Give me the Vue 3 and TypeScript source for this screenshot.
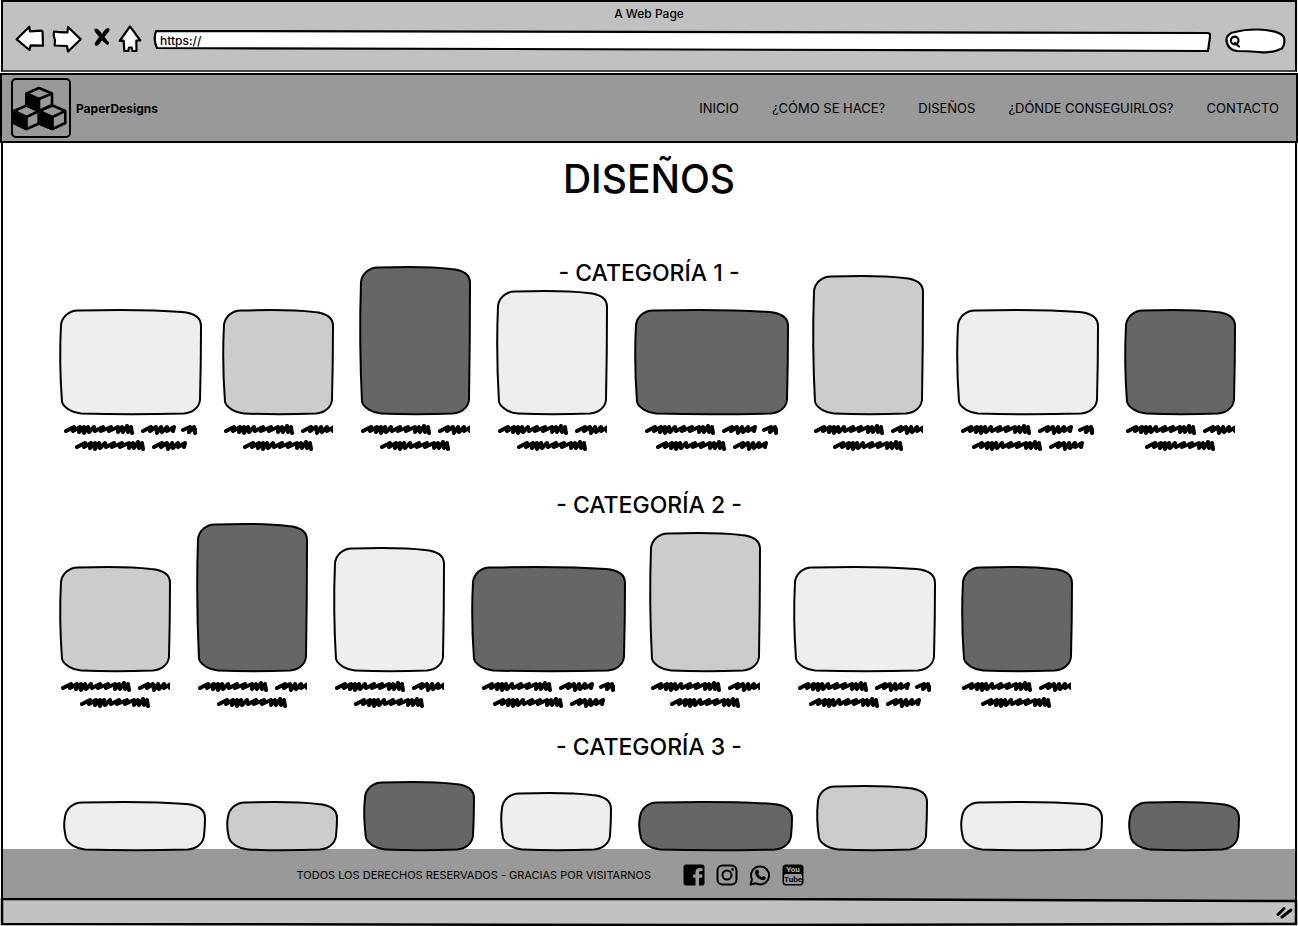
<script setup lang="ts">
type Tone = 'light' | 'mid' | 'dark'

interface Design {
  slot: number
  width: number
  height: number
  tone: Tone
}

interface Category {
  title: string
  spacing: string
  captions: boolean
  designs: Design[]
}

const card = (slot: number, width: number, height: number, tone: Tone): Design => ({ slot, width, height, tone })

const links: string[] = ['INICIO', '¿CÓMO SE HACE?', 'DISEÑOS', '¿DÓNDE CONSEGUIRLOS?', 'CONTACTO']

const categories: Category[] = [
  {
    title: '- CATEGORÍA 1 -',
    spacing: 'raised',
    captions: true,
    designs: [
      card(163, 143, 106, 'light'),
      card(137, 112, 106, 'mid'),
      card(137, 112, 149, 'dark'),
      card(138, 112, 125, 'light'),
      card(178, 155, 106, 'dark'),
      card(144, 112, 140, 'mid'),
      card(168, 143, 106, 'light'),
      card(171, 112, 106, 'dark'),
    ],
  },
  {
    title: '- CATEGORÍA 2 -',
    spacing: 'close',
    captions: true,
    designs: [
      card(137, 112, 106, 'mid'),
      card(137, 112, 149, 'dark'),
      card(138, 112, 125, 'light'),
      card(178, 155, 106, 'dark'),
      card(144, 112, 140, 'mid'),
      card(168, 143, 106, 'light'),
      card(334, 112, 106, 'dark'),
    ],
  },
  {
    title: '- CATEGORÍA 3 -',
    spacing: 'loose',
    captions: false,
    designs: [
      card(163, 143, 50, 'light'),
      card(137, 112, 50, 'mid'),
      card(137, 112, 70, 'dark'),
      card(138, 112, 59, 'light'),
      card(178, 155, 50, 'dark'),
      card(144, 112, 66, 'mid'),
      card(168, 143, 50, 'light'),
      card(167, 112, 50, 'dark'),
    ],
  },
]

// Hand-drawn rounded rectangle for a card of the given size
function outline(w: number, h: number): string {
  const mid = Math.round(h / 2)
  return [
    `M2 16`,
    `C3 8 10 1 20 1.5`,
    `Q${w * 0.6} 0 ${w - 20} 3`,
    `C${w - 8} 4 ${w - 1} 8 ${w - 1} 17`,
    `Q${w - 1} ${mid} ${w - 2} ${h - 15}`,
    `C${w - 3} ${h - 7} ${w - 10} ${h - 2} ${w - 18} ${h - 1.5}`,
    `Q${w * 0.5} ${h} 22 ${h - 1.5}`,
    `C14 ${h - 2} 5 ${h - 7} 3 ${h - 13}`,
    `Q0 ${mid} 2 16Z`,
  ].join(' ')
}

const scribble: string =
  'M2 7L10 3L9 7L16 3L15 8L20 3L20 9L24 3L25 8L30 3L31 7L39 3L37 7L47 3L45 7L54 3L54 8L58 3L59 8L63 2L64 8L67 3L68 9' +
  'M79 7L87 3L86 7L92 3L93 9L97 3L98 8L103 3L103 7L110 3L109 7' +
  'M119 6L126 3L125 8L130 3L131 9L136 3'

const captionLines = (d: Design): number[] => (d.width > 120 ? [133, 112] : [109, 71])
</script>

<template>
  <div class="window">
    <div class="chrome">
      <div class="window-title">A Web Page</div>
      <div class="toolbar">
        <button type="button" class="tool" aria-label="Back">
          <svg width="32" height="30" viewBox="14 22 32 30"><path class="ink paper" d="M16.7 37.3L29.3 24.7L30 29.3L41 28.7Q43 29 42.6 31L43 43.7L30.7 43.3L29.5 48Z" /></svg>
        </button>
        <button type="button" class="tool" aria-label="Forward">
          <svg width="32" height="30" viewBox="51 22 32 30"><path class="ink paper" d="M80.7 37.3L68 25L67.4 30.3Q60 30.5 54 29.5Q53 34 55 38L54.7 43.5L67 44L68 49.5Z" /></svg>
        </button>
        <button type="button" class="tool stop" aria-label="Stop">
          <svg width="20" height="30" viewBox="92 23 20 30"><path d="M96 27.5Q99 28 102 33Q104.500 28 108 27Q110.500 27.500 109 30.500L104.500 36L109 41.500Q109.500 44.500 106.500 43.500L102 39.500L98 44.500Q94.500 45.500 94.500 42.500L99 36L94.500 30Q94 27.500 96 27.500Z" /></svg>
        </button>
        <button type="button" class="tool" aria-label="Home">
          <svg width="26" height="30" viewBox="117 22 26 30"><path class="ink paper" d="M130 24.3L140.3 38.5L136.3 38.5L136.5 49H132.3L131.7 45.5H129L128.3 49H124.3L123.7 38.7L119.7 39Z" /></svg>
        </button>
        <label class="address">
          <svg class="frame" viewBox="0 0 1058 24" preserveAspectRatio="none" aria-hidden="true"><path class="ink paper" d="M3 2L1054 4Q1058 4 1057 8L1055 22L4 19Q0 11 3 2Z" vector-effect="non-scaling-stroke" /></svg>
          <input type="text" value="https://" aria-label="Address" />
        </label>
        <label class="search">
          <svg class="frame" viewBox="0 0 62 26" aria-hidden="true">
            <path class="ink paper" d="M2.5 13C2 8 6 4.5 11 4Q21 1.3 34 1.5Q55 2.5 59.5 8.5Q62 15 58 20.5C53 23 45 24.5 39 24.3Q22 23 13 23Q4 22 2.5 13Z" />
            <path class="ink" fill="none" d="M14.5 12.500A3.800 3.800 0 1 1 10.700 8.700A3.800 3.800 0 0 1 14.500 12.500M11 15L15 18.500" />
          </svg>
          <input type="search" aria-label="Search" />
        </label>
      </div>
    </div>

    <header class="site-header">
      <a class="brand" href="#">
        <svg width="62" height="62" viewBox="0 0 62 62" aria-hidden="true">
          <rect x="2" y="2" width="58" height="58" rx="4" fill="none" stroke="#000" stroke-width="2" />
          <g stroke="#000" stroke-width="2.6" stroke-linejoin="round" fill="none">
            <path d="M29 11L42 16.5V28L29 34L16.5 28V16.5ZM29 22L42 16.5" />
            <path d="M29 22V34L16.5 28V16.5Z" fill="#000" />
            <path d="M16.5 28.5L29 34V46.5L16.5 52L4 46V34ZM16.5 40L29 34" />
            <path d="M16.5 40V52L4 46V34Z" fill="#000" />
            <path d="M42.5 28.5L55.3 34V46L42.5 52L29 46.5V34ZM42.5 40L55.3 34" />
            <path d="M42.5 40V52L29 46.5V34Z" fill="#000" />
          </g>
        </svg>
        <span>PaperDesigns</span>
      </a>
      <nav class="menu">
        <a v-for="link in links" :key="link" href="#">{{ link }}</a>
      </nav>
    </header>

    <main class="content">
      <h1>DISEÑOS</h1>
      <section v-for="category in categories" :key="category.title" class="category" :class="category.spacing">
        <h2>{{ category.title }}</h2>
        <div class="row">
          <div v-for="(d, i) in category.designs" :key="i" class="slot" :style="{ flexGrow: d.slot }">
            <figure :style="{ width: (d.width / d.slot) * 100 + '%' }">
              <svg class="card" :class="d.tone" :viewBox="`0 0 ${d.width} ${d.height}`" :height="d.height" preserveAspectRatio="none" role="img" aria-label="Diseño">
                <path :d="outline(d.width, d.height)" vector-effect="non-scaling-stroke" />
              </svg>
              <figcaption v-if="category.captions">
                <svg v-for="w in captionLines(d)" :key="w" :width="w" height="11" :viewBox="`0 0 ${w} 11`" aria-hidden="true">
                  <path :d="scribble" />
                </svg>
              </figcaption>
            </figure>
          </div>
        </div>
      </section>
    </main>

    <footer class="site-footer">
      <p>TODOS LOS DERECHOS RESERVADOS - GRACIAS POR VISITARNOS</p>
      <div class="social">
        <a href="#" aria-label="Facebook">
          <svg width="22" height="22" viewBox="0 0 22 22"><path fill-rule="evenodd" d="M3 .5H19Q21.5 .5 21.5 3V19Q21.5 21.5 19 21.5H16V13.7H19L19.500 10.500H16V8.500Q16 7 17.700 7H19.500V4.300Q12.500 3 12.500 8V10.500H10V13.700H12.500V21.500H3Q.5 21.5 .5 19V3Q.5 .5 3 .5Z" /></svg>
        </a>
        <a href="#" aria-label="Instagram">
          <svg width="22" height="22" viewBox="0 0 22 22" fill="none" stroke="#000" stroke-width="2"><rect x="1.5" y="1.5" width="19" height="19" rx="5" /><circle cx="11" cy="11" r="4.5" /><circle cx="16.6" cy="5.4" r="1.3" fill="#000" stroke="none" /></svg>
        </a>
        <a href="#" aria-label="WhatsApp">
          <svg width="22" height="22" viewBox="0 0 22 22"><path d="M1.5 20.5L3 15.5A9 9 0 1 1 6.5 19.2Z" fill="none" stroke="#000" stroke-width="2" stroke-linejoin="round" /><path d="M7.5 5.5L9.3 6L10.2 8.6L9.2 10Q10.5 12.3 13 13.2L14.2 12L16.8 13.2Q17 16 14 16.3Q8 15.5 6 9.5Q5.8 6.5 7.5 5.5Z" /></svg>
        </a>
        <a href="#" aria-label="YouTube">
          <svg width="22" height="22" viewBox="0 0 22 22"><rect x=".5" y=".5" width="21" height="21" rx="3.5" /><rect x="2" y="10" width="18" height="10" rx="2" fill="#999" /><text x="11" y="8" fill="#bbb">You</text><text x="11" y="18">Tube</text></svg>
        </a>
      </div>
    </footer>

    <div class="status">
      <svg class="status-line" viewBox="0 0 1298 28" preserveAspectRatio="none" aria-hidden="true">
        <path d="M2 1L760 1L1296 3V26L700 27L2 26Z" fill="#c2c2c2" stroke="#000" stroke-width="2.5" vector-effect="non-scaling-stroke" />
      </svg>
      <svg class="grip" width="18" height="14" viewBox="0 0 18 14" aria-hidden="true"><path d="M3 10.5L9 4.5M7 13L16 6" transform="translate(0 -1)" fill="none" stroke="#000" stroke-width="3" stroke-linecap="round" /></svg>
    </div>
  </div>
</template>

<style>
body {
  background: #fff;
}
</style>

<style scoped>
.window {
  box-sizing: border-box;
  min-height: 100vh;
  display: flex;
  flex-direction: column;
  color: #000;
  font-family: Inter, "Open Sans", sans-serif;
}

.ink {
  stroke: #000;
  stroke-width: 2.2;
  stroke-linejoin: round;
  stroke-linecap: round;
}

.paper {
  fill: #fff;
}

.chrome {
  box-sizing: border-box;
  height: 72px;
  margin: 0 1px;
  border: 2px solid #000;
  border-bottom-color: #444;
  background: #c1c1c1;
}

.window-title {
  padding-top: 3px;
  font-size: 12px;
  font-weight: 500;
  line-height: 18px;
  text-align: center;
}

.toolbar {
  display: flex;
  align-items: center;
  height: 32px;
  padding: 0 9px 0 11px;
}

.tool {
  flex: none;
  margin-right: 5px;
  padding: 0;
  border: 0;
  background: none;
  line-height: 0;
}

.stop {
  margin: 0 5px 0 4px;
}

.address,
.search {
  position: relative;
  display: flex;
  align-items: center;
}

.address {
  flex: 1;
  height: 24px;
  margin: 4px 13px 0 5px;
}

.search {
  flex: none;
  width: 62px;
  height: 26px;
  margin-top: 4px;
}

.frame {
  position: absolute;
  inset: 0;
  width: 100%;
  height: 100%;
}

.address input,
.search input {
  position: relative;
  box-sizing: border-box;
  width: 100%;
  padding: 0 7px;
  border: 0;
  outline: 0;
  background: none;
  color: #000;
  font: 500 12px/20px Inter, "Open Sans", sans-serif;
}

.search input {
  padding-left: 20px;
}

.site-header {
  box-sizing: border-box;
  display: flex;
  align-items: center;
  justify-content: space-between;
  height: 70px;
  margin-top: 1px;
  padding: 0 17px 0 8px;
  border: 2px solid #000;
  background: #999;
}

.brand {
  display: flex;
  align-items: center;
  gap: 4px;
  color: #000;
  font-size: 12px;
  font-weight: 700;
  text-decoration: none;
}

.menu {
  display: flex;
  gap: 33px;
}

.menu a {
  color: #000;
  font-size: 13px;
  line-height: 18px;
  text-decoration: none;
}

.content {
  flex: 1;
  margin: 0 1px;
  border: solid #000;
  border-width: 0 2px;
}

h1 {
  margin: 11px 0 0;
  font-size: 39px;
  font-weight: 500;
  line-height: 50px;
  text-align: center;
}

h2 {
  margin: 0;
  font-size: 23px;
  font-weight: 500;
  line-height: 30px;
  text-align: center;
}

.row {
  display: flex;
  align-items: flex-end;
  padding-left: 56px;
}

.slot {
  flex: 1 1 0;
  min-width: 0;
}

figure {
  margin: 0;
}

.raised {
  padding-top: 54px;
}

.raised .row {
  margin-top: -22px;
}

.close {
  padding-top: 39px;
}

.close .row {
  margin-top: 3px;
}

.loose {
  padding-top: 24px;
}

.loose .row {
  margin: 19px 0 -3px;
  padding-left: 60px;
}

.loose .card {
  position: relative;
}

.card {
  display: block;
  width: 100%;
  overflow: visible;
  stroke: #000;
  stroke-width: 2;
}

.light {
  fill: #eee;
}

.mid {
  fill: #ccc;
}

.dark {
  fill: #666;
}

figcaption {
  display: flex;
  flex-direction: column;
  align-items: center;
  gap: 5px;
  padding-top: 9px;
}

figcaption path {
  fill: none;
  stroke: #000;
  stroke-width: 4;
  stroke-linecap: round;
  stroke-linejoin: round;
}

.site-footer {
  display: flex;
  align-items: center;
  gap: 32px;
  height: 51px;
  margin: 0 1px;
  padding-left: calc(23% - 5px);
  border: solid #000;
  border-width: 0 2px;
  background: #999;
}

.site-footer p {
  margin: 0;
  font-size: 11px;
  line-height: 16px;
}

.social {
  display: flex;
  gap: 11px;
}

.social a {
  line-height: 0;
}

.social text {
  font: 700 8px Roboto, sans-serif;
  text-anchor: middle;
}

.status {
  position: relative;
  display: flex;
  align-items: center;
  justify-content: flex-end;
  height: 28px;
  margin-top: -2px;
}

.status-line {
  position: absolute;
  inset: 0;
  width: 100%;
  height: 100%;
}

.grip {
  position: relative;
  margin-right: 5px;
}
</style>
